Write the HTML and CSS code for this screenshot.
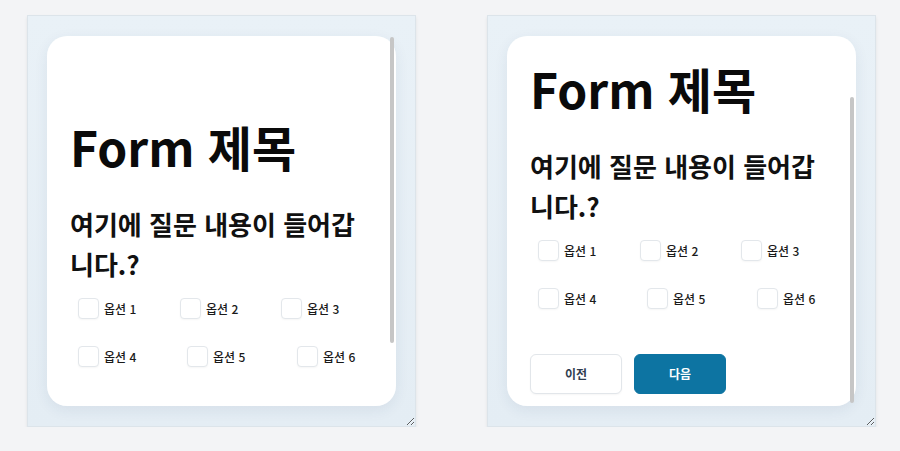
FILE: index.html
```html
<!DOCTYPE html>
<html lang="ko">
<head>
<meta charset="utf-8">
<title>Form</title>
<link rel="stylesheet" href="styles.css">
</head>
<body>
<main class="stage">
  <section class="frame">
    <form class="card">
      <h1 class="card__title">Form 제목</h1>
      <p class="card__question">여기에 질문 내용이 들어갑니다.?</p>
      <div class="options">
        <div class="options__row options__row--a">
          <label class="option"><input type="checkbox" class="option__box"><span>옵션 1</span></label>
          <label class="option"><input type="checkbox" class="option__box"><span>옵션 2</span></label>
          <label class="option"><input type="checkbox" class="option__box"><span>옵션 3</span></label>
        </div>
        <div class="options__row options__row--b">
          <label class="option"><input type="checkbox" class="option__box"><span>옵션 4</span></label>
          <label class="option"><input type="checkbox" class="option__box"><span>옵션 5</span></label>
          <label class="option"><input type="checkbox" class="option__box"><span>옵션 6</span></label>
        </div>
      </div>
      <div class="actions">
        <button type="button" class="btn btn--ghost">이전</button>
        <button type="button" class="btn btn--primary">다음</button>
      </div>
    </form>
    <div class="thumb thumb--top"></div>
  </section>
  <section class="frame">
    <form class="card card--end">
      <h1 class="card__title">Form 제목</h1>
      <p class="card__question">여기에 질문 내용이 들어갑니다.?</p>
      <div class="options">
        <div class="options__row options__row--a">
          <label class="option"><input type="checkbox" class="option__box"><span>옵션 1</span></label>
          <label class="option"><input type="checkbox" class="option__box"><span>옵션 2</span></label>
          <label class="option"><input type="checkbox" class="option__box"><span>옵션 3</span></label>
        </div>
        <div class="options__row options__row--b">
          <label class="option"><input type="checkbox" class="option__box"><span>옵션 4</span></label>
          <label class="option"><input type="checkbox" class="option__box"><span>옵션 5</span></label>
          <label class="option"><input type="checkbox" class="option__box"><span>옵션 6</span></label>
        </div>
      </div>
      <div class="actions">
        <button type="button" class="btn btn--ghost">이전</button>
        <button type="button" class="btn btn--primary">다음</button>
      </div>
    </form>
    <div class="thumb thumb--bottom"></div>
  </section>
</main>
<script src="script.js"></script>
</body>
</html>
```

FILE: styles.css
```css
* { box-sizing: border-box; }

html, body {
  margin: 0;
  padding: 0;
  background: #f3f4f6;
  font-family: "Noto Sans CJK KR", "Noto Sans", sans-serif;
  color: #111;
}

.stage {
  display: flex;
  gap: 71px;
  padding: 15px 0 0 27px;
}

.frame {
  position: relative;
  width: 389px;
  height: 412px;
  padding: 20px 19px;
  background: linear-gradient(#e9f1f7, #e4edf4);
  border: 1px solid #dce4ea;
  box-shadow: 0 2px 3px rgba(0, 0, 0, 0.08);
  resize: both;
  overflow: auto;
}

.card {
  height: 100%;
  background: #fff;
  border-radius: 20px;
  padding: 24px 31px 12px 23px;
  overflow-y: auto;
  scrollbar-width: none;
  box-shadow: 0 4px 14px rgba(40, 70, 100, 0.08);
}
.card::-webkit-scrollbar { display: none; }

/* scrollbar thumb drawn over the card's right edge */
.thumb {
  position: absolute;
  left: 362px;
  width: 4px;
  height: 306px;
  border-radius: 2px;
  background: #c6c6c6;
}
.thumb--top { top: 21px; }
.thumb--bottom { top: 81px; }

.card__title {
  margin: 58px 0 0;
  font-size: 48px;
  line-height: 1.2;
  font-weight: 700;
  color: #0a0a0a;
}

.card__question {
  margin: 28px 0 0;
  font-size: 26px;
  line-height: 40px;
  font-weight: 700;
  color: #111;
}

.options {
  margin-top: 14px;
  padding-left: 8px;
  display: flex;
  flex-direction: column;
  gap: 27px;
}

.options__row {
  display: grid;
  align-items: center;
}
.options__row--a { grid-template-columns: 102px 101px auto; }
.options__row--b { grid-template-columns: 109px 110px auto; }

.option {
  display: flex;
  align-items: center;
  gap: 5px;
  font-size: 12px;
  font-weight: 500;
  color: #1a1a1a;
  line-height: 21px;
}

.option__box {
  appearance: none;
  -webkit-appearance: none;
  margin: 0;
  width: 21px;
  height: 21px;
  border: 1px solid #e3e7eb;
  border-radius: 4px;
  background: #fff;
  box-shadow: 0 1px 2px rgba(0, 0, 0, 0.04);
}

.actions {
  margin-top: 45px;
  display: flex;
  gap: 12px;
}

.btn {
  width: 92px;
  height: 40px;
  border-radius: 6px;
  font-family: inherit;
  font-size: 12px;
  font-weight: 700;
}

.btn--ghost {
  background: #fff;
  border: 1px solid #e2e6ea;
  color: #2f3d4f;
  box-shadow: 0 1px 2px rgba(0, 0, 0, 0.04);
}

.btn--primary {
  background: #0d74a2;
  border: 1px solid #0d74a2;
  color: #fff;
}
```

FILE: script.js
```js
document.querySelectorAll('.card--end').forEach(function (el) {
  el.scrollTop = el.scrollHeight;
});
```
